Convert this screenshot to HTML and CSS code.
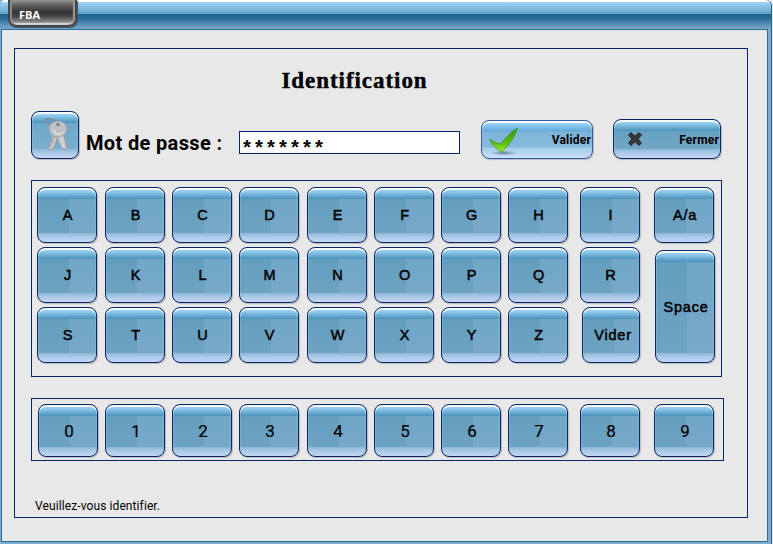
FILE: index.html
```html
<!DOCTYPE html>
<html lang="fr">
<head>
<meta charset="utf-8">
<title>FBA</title>
<link rel="stylesheet" href="styles.css">
</head>
<body>
<div class="window">
  <header class="titlebar"><div class="tab">FBA</div></header>
  <div class="client">
    <main class="frame">
      <h1 class="title">Identification</h1>
      <div class="login">
        <div class="btn keys-icon">
          <svg width="30" height="38" viewBox="0 0 30 38">
            <path d="M7 9C1 6 3 3 8 4C14 5 18 8 17 12" fill="none" stroke="#788b96" stroke-width="1.500"/>
            <path d="M10 18l6 3-5 14-3 .5-3-3 3-2-1-2 2-2z" fill="#b4b8bb" stroke="#8b969d" stroke-width=".7"/>
            <path d="M14 20l7-2 4 14-2 3-4-2-1-3z" fill="#c6c7c8" stroke="#8b969d" stroke-width=".7"/>
            <ellipse cx="16" cy="14" rx="9" ry="8" fill="#bfc1c3" stroke="#929ca2" stroke-width=".7"/>
            <path d="M12 15a5 5 0 0 0 9 2" fill="none" stroke="#d8dadb" stroke-width="2"/>
            <circle cx="16" cy="9.500" r="1.700" fill="#6f838f"/>
            <path d="M14 23L10 33M19 22l3 10" stroke="#e0e0e0" stroke-width="1"/>
          </svg>
        </div>
        <span class="label">Mot de passe :</span>
        <div class="field">*******</div>
        <button class="btn action ok">
          <svg width="32" height="30" viewBox="0 0 32 30">
            <defs>
              <linearGradient id="g" x1="0" y1="0" x2="0" y2="1"><stop offset="0" stop-color="#2f9508"/><stop offset=".6" stop-color="#55bd09"/><stop offset="1" stop-color="#a9e83f"/></linearGradient>
              <radialGradient id="s"><stop offset="0" stop-color="#456478" stop-opacity=".75"/><stop offset="1" stop-color="#567b94" stop-opacity="0"/></radialGradient>
            </defs>
            <ellipse cx="15" cy="27" rx="14" ry="2.600" fill="url(#s)"/>
            <path d="M1 13C4 16 8 17 12 18C16 12 22 6 28.500 2C26 11 20 19 13 26C8 24 2 18 1 13Z" fill="url(#g)" stroke="#39960c" stroke-width=".7"/>
          </svg>
          <span>Valider</span>
        </button>
        <button class="btn action close">
          <svg width="16" height="16" viewBox="0 0 16 16"><path d="M4 1.500L8 5.300 12 1.500 14.500 4 11 8l3.500 4L12 14.500 8 10.700 4 14.500 1.500 12 5 8 1.500 4z" fill="#363636" stroke="#292929" stroke-width="1" stroke-linejoin="round"/></svg>
          <span>Fermer</span>
        </button>
      </div>
      <section class="pad letters">
        <button class="btn key">A</button><button class="btn key">B</button><button class="btn key">C</button><button class="btn key">D</button><button class="btn key">E</button><button class="btn key">F</button><button class="btn key">G</button><button class="btn key">H</button><button class="btn key">I</button><button class="btn key">A/a</button>
        <button class="btn key">J</button><button class="btn key">K</button><button class="btn key">L</button><button class="btn key">M</button><button class="btn key">N</button><button class="btn key">O</button><button class="btn key">P</button><button class="btn key">Q</button><button class="btn key">R</button><button class="btn key space">Space</button>
        <button class="btn key">S</button><button class="btn key">T</button><button class="btn key">U</button><button class="btn key">V</button><button class="btn key">W</button><button class="btn key">X</button><button class="btn key">Y</button><button class="btn key">Z</button><button class="btn key clear">Vider</button>
      </section>
      <section class="pad digits">
        <button class="btn key zero">0</button><button class="btn key">1</button><button class="btn key">2</button><button class="btn key">3</button><button class="btn key">4</button><button class="btn key">5</button><button class="btn key">6</button><button class="btn key">7</button><button class="btn key">8</button><button class="btn key">9</button>
      </section>
      <p class="status">Veuillez-vous identifier.</p>
    </main>
  </div>
</div>
</body>
</html>
```
FILE: styles.css
```css
* { box-sizing: border-box; }
body { margin: 0; width: 773px; height: 544px; overflow: hidden; background: #e4eaee; font-family: Roboto, "Liberation Sans", sans-serif; color: #000; }
.window { width: 772px; height: 544px; background: #7eaacb; border-right: 1px solid #24618a; border-radius: 0 6px 0 0; overflow: hidden; }
.titlebar { height: 29px; padding-left: 8px; border-radius: 5px 5px 0 0; background: linear-gradient(#fff 0 2px, #a2d5f5 2px, #86bfe3 7px, #61a1c9 14px, #1d638f 14px, #256a96 18px, #7da9ca 29px); }
.tab { width: 69px; height: 27px; padding: 7px 0 0 9px; border: 2px solid #464646; border-top: 0; border-radius: 0 0 8px 8px; background: linear-gradient(#969696, #616161 5px, #353535 12px, #444 16px, #a0a0a0 24px); box-shadow: inset 2px 0 1px #888, inset -2px 0 1px #999, inset 0 -2px 1px #ddd, 1px 1px 1px #36546a; color: #fff; font: bold 11px/16px "Open Sans", sans-serif; }
.client { width: 767px; height: 513px; margin-left: 1px; padding: 18px 0 0 12px; background: #e8e8e8; border: 1px solid #286e9a; }
.frame { width: 734px; height: 470px; padding: 0 0 0 16px; border: 1px solid #0a246a; }
.title { width: 647px; height: 62px; margin: 0; padding-top: 17px; text-align: center; font: bold 23px/30px "Liberation Serif", serif; letter-spacing: .95px; -webkit-text-stroke: .4px #000; }
.login { display: flex; align-items: flex-start; height: 69px; }
.btn { --sheen: linear-gradient(#b4e0fb, #8cc8eb 5px, #4a91b9 12px, transparent 12px); --base: linear-gradient(0deg, #c8daf6, #a6c6e5 7px, #8bb6d5 10px, transparent 10px); margin: 0; padding: 0; border: 1px solid #0a246a; border-radius: 8px; color: #000; box-shadow: inset 0 2px 0 #f5fbff, inset 1px 0 0 #9cc6e055, inset -1px 0 0 #9cc6e055, 1px 1px 1px #bbb; background: var(--sheen), var(--base), linear-gradient(#609dbe, #79a9ca); background-origin: border-box; font-family: Roboto, "Liberation Sans", sans-serif; }
.keys-icon { width: 48px; height: 48px; padding: 3px 0 0 10px; background: var(--sheen), var(--base), linear-gradient(#6aa5c5, #80b0d2); background-origin: border-box; }
.label { width: 153px; margin: 20px 0 0 7px; font-size: 20px; line-height: 24px; font-weight: 700; letter-spacing: .35px; white-space: nowrap; }
.field { width: 221px; height: 23px; margin: 20px 1px 0 0; padding: 8px 0 0 1px; border: 1px solid #0a246a; background: #fff; font: bold 20px/20px "Liberation Mono", monospace; }
.action { display: flex; align-items: center; justify-content: space-between; font-size: 12px; font-weight: 700; letter-spacing: .2px; }
.ok { width: 112px; height: 39px; margin: 9px 1px 0 20px; padding: 2px 1px 0 7px; border-color: #3957a5; background: linear-gradient(#b8e5ff, #94d0fa 4px, #65a8d6 11px, transparent 12px), linear-gradient(0deg, #cde3fc, #a4cbe9 11px, transparent 12px), linear-gradient(#75afd5, #91bee0); background-origin: border-box; }
.ok span { padding-bottom: 2px; }
.close { width: 108px; height: 40px; margin: 8px 0 0 19px; padding: 0 1px 0 13px; }
.close span { padding-top: 1px; }
.pad { display: grid; border: 1px solid #0a246a; grid-template-columns: 68px 67px 67px 68px 67px 67px 67px 72px 74px 60px; }
.letters { width: 691px; height: 197px; padding: 6px 0 0 5px; grid-template-rows: 60px 60px 56px; }
.key { width: 60px; height: 56px; padding-left: 2px; font: 14.5px "Liberation Sans", sans-serif; letter-spacing: .8px; -webkit-text-stroke: .5px #000; background: var(--sheen), var(--base), linear-gradient(90deg, transparent 32px, #8cb6d655 32px), linear-gradient(#609dbe, #70a3c3); background-origin: border-box; }
.space { grid-column: 10; grid-row: 2 / 4; height: 113px; margin: 3px 0 0 1px; }
.clear { width: 58px; margin-left: 2px; padding-left: 4px; }
.digits { width: 693px; height: 63px; margin-top: 21px; padding: 5px 0 0 5px; }
.digits .key { height: 53px; font-family: Roboto, sans-serif; font-size: 17px; letter-spacing: 0; padding: 0 0 0 2px; -webkit-text-stroke: .2px #000; }
.digits .zero { margin-left: 1px; }
.status { margin: 37px 0 0 4px; font-size: 12px; line-height: 16px; letter-spacing: .1px; }
```
